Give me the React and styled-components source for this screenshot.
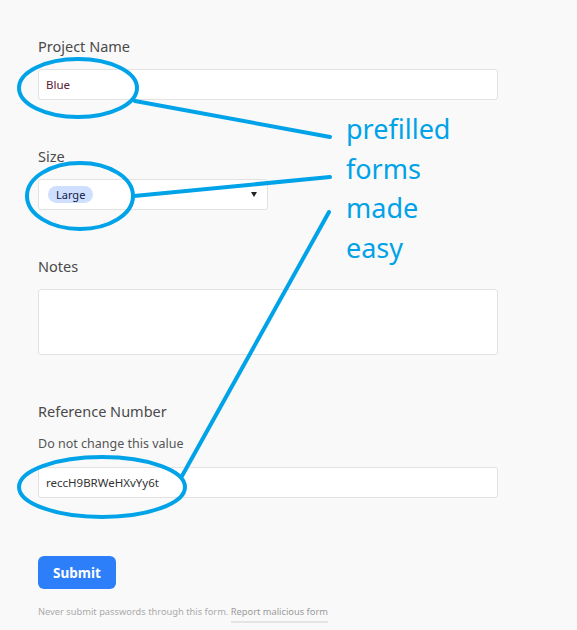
import React from 'react';
import styled, { createGlobalStyle } from 'styled-components';

const ANNOTATION = '#00a2e8';

const GlobalStyle = createGlobalStyle`
  html, body {
    margin: 0;
    padding: 0;
    background: #f9f9f9;
  }
  body {
    font-family: "Noto Sans", "Open Sans", sans-serif;
    color: #444;
  }
`;

const Page = styled.div`
  position: relative;
  width: 577px;
  height: 630px;
  overflow: hidden;
  background: #f9f9f9;
`;

const Form = styled.form`
  display: flex;
  flex-direction: column;
  width: 460px;
  padding: 36px 0 0 38px;
`;

const Field = styled.div`
  display: flex;
  flex-direction: column;
  margin-bottom: ${props => props.gap || 46}px;
`;

const Label = styled.label`
  font-size: 14.5px;
  line-height: 20px;
  color: #4a4a4a;
  margin-bottom: 13px;
`;

const Description = styled.div`
  font-size: 12.5px;
  line-height: 18px;
  color: #555;
  margin: 1px 0 14px;
`;

const Input = styled.div`
  box-sizing: border-box;
  width: ${props => props.width || 460}px;
  height: ${props => props.height || 31}px;
  background: #fff;
  border: 1px solid #e2e2e2;
  border-radius: 3px;
  display: flex;
  align-items: ${props => (props.top ? 'flex-start' : 'center')};
  justify-content: space-between;
  padding: 0 10px 0 7px;
  font-size: 11.5px;
  color: #333;
`;

const Value = styled.span`
  color: ${props => props.color || '#333'};
`;

const Chip = styled.span`
  display: inline-flex;
  align-items: center;
  height: 17px;
  padding: 0 8px;
  margin-left: 2px;
  border-radius: 9px;
  background: #cfdfff;
  color: #102046;
  font-size: 11px;
`;

const Caret = styled.span`
  width: 0;
  height: 0;
  border-left: 3.5px solid transparent;
  border-right: 3.5px solid transparent;
  border-top: 5px solid #222;
`;

const Submit = styled.button`
  align-self: flex-start;
  margin-top: 12px;
  width: 78px;
  height: 33px;
  border: none;
  border-radius: 6px;
  background: #2d7ff9;
  color: #fff;
  font-family: "Noto Sans", "Open Sans", sans-serif;
  font-weight: 700;
  font-size: 13.5px;
  cursor: pointer;
`;

const Footer = styled.div`
  margin-top: 16px;
  font-size: 9.3px;
  line-height: 14px;
  color: #aaa;
  white-space: nowrap;
`;

const ReportLink = styled.span`
  padding-bottom: 3px;
  border-bottom: 2px solid #e4e4e4;
  color: #999;
`;

const Overlay = styled.svg`
  position: absolute;
  left: 0;
  top: 0;
  pointer-events: none;
`;

const Callout = styled.div`
  position: absolute;
  left: 346px;
  top: 109px;
  font-family: "Noto Sans", "Open Sans", sans-serif;
  font-size: 27px;
  line-height: 39.5px;
  color: ${ANNOTATION};
`;

export default function App() {
  return (
    <Page>
      <GlobalStyle />
      <Form onSubmit={e => e.preventDefault()}>
        <Field>
          <Label>Project Name</Label>
          <Input>
            <Value color="#5a2035">Blue</Value>
          </Input>
        </Field>
        <Field>
          <Label>Size</Label>
          <Input width={230}>
            <Chip>Large</Chip>
            <Caret />
          </Input>
        </Field>
        <Field>
          <Label>Notes</Label>
          <Input height={66} top />
        </Field>
        <Field>
          <Label>Reference Number</Label>
          <Description>Do not change this value</Description>
          <Input>
            <Value>reccH9BRWeHXvYy6t</Value>
          </Input>
        </Field>
        <Submit type="submit">Submit</Submit>
        <Footer>
          Never submit passwords through this form. <ReportLink>Report malicious form</ReportLink>
        </Footer>
      </Form>

      <Overlay width="577" height="630" viewBox="0 0 577 630">
        <g fill="none" stroke={ANNOTATION} strokeWidth="4" strokeLinecap="round">
          <ellipse cx="78" cy="88" rx="59" ry="29" />
          <line x1="135" y1="101" x2="330" y2="137" />
          <ellipse cx="80" cy="196" rx="53" ry="33" />
          <line x1="134" y1="196" x2="330" y2="177" />
          <ellipse cx="102" cy="487" rx="83" ry="30" />
          <line x1="329" y1="212" x2="182" y2="476" />
        </g>
      </Overlay>
      <Callout>
        prefilled
        <br />
        forms
        <br />
        made
        <br />
        easy
      </Callout>
    </Page>
  );
}
